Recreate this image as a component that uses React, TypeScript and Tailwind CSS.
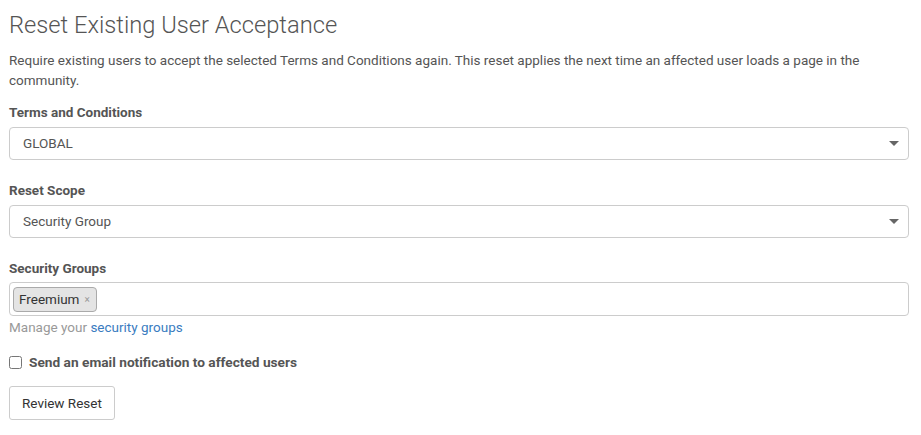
import React, { useState } from 'react';

const SelectBox: React.FC<{ value: string }> = ({ value }) => (
  <div className="flex h-[33px] items-center justify-between rounded-[4px] border border-[#cccccc] bg-white pl-[13px] pr-[9px] text-[13.5px] text-[#555555]">
    <span>{value}</span>
    <svg width="10" height="6" viewBox="0 0 10 6" className="mt-[1px]">
      <path d="M0 0h10L5 5z" fill="#666666" />
    </svg>
  </div>
);

const App: React.FC = () => {
  const [notify, setNotify] = useState(false);

  return (
    <div className="min-h-screen bg-white pl-[9px] pr-[12px] pt-[9px] font-['Roboto',sans-serif] text-[13.5px] text-[#555555]">
      <h1 className="text-[23.7px] font-light leading-[32px] text-[#555555]">Reset Existing User Acceptance</h1>

      <p className="mt-[9px] pr-[30px] leading-[20px] text-[#555555]">
        Require existing users to accept the selected Terms and Conditions again. This reset applies the next time an
        affected user loads a page in the community.
      </p>

      <label className="mt-[12px] block text-[13.5px] font-bold leading-[20px] text-[#555555]">Terms and Conditions</label>
      <div className="mt-[5px]">
        <SelectBox value="GLOBAL" />
      </div>

      <label className="mt-[20px] block text-[13.5px] font-bold leading-[20px] text-[#555555]">Reset Scope</label>
      <div className="mt-[5px]">
        <SelectBox value="Security Group" />
      </div>

      <label className="mt-[20px] block text-[13.5px] font-bold leading-[20px] text-[#555555]">Security Groups</label>
      <div className="mt-[4px] flex h-[34px] items-center rounded-[4px] border border-[#cccccc] bg-white px-[3px]">
        <span className="flex h-[25px] items-center gap-[5px] rounded-[4px] border border-[#aaaaaa] bg-[#e4e4e4] pl-[5px] pr-[6px] text-[13.5px] text-[#333333]">
          Freemium
          <span className="text-[10px] text-[#999999]">×</span>
        </span>
      </div>
      <div className="mt-[1px] leading-[20px] text-[#999999]">
        Manage your <span className="cursor-pointer text-[#3a7cbf]">security groups</span>
      </div>

      <label className="mt-[15px] flex items-center gap-[7px] text-[13.7px] font-bold leading-[20px] text-[#555555]">
        <input
          type="checkbox"
          checked={notify}
          onChange={e => setNotify(e.target.checked)}
          className="h-[13px] w-[13px] accent-[#555555]"
        />
        Send an email notification to affected users
      </label>

      <button className="mt-[14px] h-[34px] rounded-[3px] border border-[#cccccc] bg-white px-[12px] text-[13.5px] text-[#333333]">
        Review Reset
      </button>
    </div>
  );
};

export default App;
